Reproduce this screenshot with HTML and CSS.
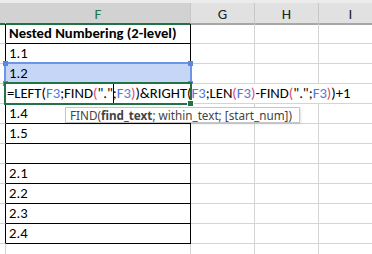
FILE: index.html
```html
<!DOCTYPE html>
<html lang="en">

<head>
    <meta charset="UTF-8">
    <title>Nested Numbering</title>
    <link rel="stylesheet" href="styles.css">
</head>

<body>

    <div class="sheet">

        <div class="head">
            <div class="col sel stub"></div>
            <div class="col sel">F</div>
            <div class="col">G</div>
            <div class="col">H</div>
            <div class="col">I</div>
        </div>

        <div class="row table">
            <div class="cell stub"></div>
            <div class="cell f bold">Nested Numbering (2-level)</div>
            <div class="cell"></div>
            <div class="cell"></div>
            <div class="cell"></div>
        </div>
        <div class="row table">
            <div class="cell stub"></div>
            <div class="cell f">1.1</div>
            <div class="cell"></div>
            <div class="cell"></div>
            <div class="cell"></div>
        </div>
        <div class="row table">
            <div class="cell stub"></div>
            <div class="cell f picked">1.2</div>
            <div class="cell"></div>
            <div class="cell"></div>
            <div class="cell"></div>
        </div>
        <div class="row table">
            <div class="cell stub"></div>
            <div class="cell f"></div>
            <div class="cell"></div>
            <div class="cell"></div>
            <div class="cell"></div>
        </div>
        <div class="row table">
            <div class="cell stub"></div>
            <div class="cell f">1.4</div>
            <div class="cell"></div>
            <div class="cell"></div>
            <div class="cell"></div>
        </div>
        <div class="row table">
            <div class="cell stub"></div>
            <div class="cell f">1.5</div>
            <div class="cell"></div>
            <div class="cell"></div>
            <div class="cell"></div>
        </div>
        <div class="row table">
            <div class="cell stub"></div>
            <div class="cell f"></div>
            <div class="cell"></div>
            <div class="cell"></div>
            <div class="cell"></div>
        </div>
        <div class="row table">
            <div class="cell stub"></div>
            <div class="cell f">2.1</div>
            <div class="cell"></div>
            <div class="cell"></div>
            <div class="cell"></div>
        </div>
        <div class="row table">
            <div class="cell stub"></div>
            <div class="cell f">2.2</div>
            <div class="cell"></div>
            <div class="cell"></div>
            <div class="cell"></div>
        </div>
        <div class="row table">
            <div class="cell stub"></div>
            <div class="cell f">2.3</div>
            <div class="cell"></div>
            <div class="cell"></div>
            <div class="cell"></div>
        </div>
        <div class="row table">
            <div class="cell stub"></div>
            <div class="cell f">2.4</div>
            <div class="cell"></div>
            <div class="cell"></div>
            <div class="cell"></div>
        </div>
        <div class="row">
            <div class="cell stub"></div>
            <div class="cell"></div>
            <div class="cell"></div>
            <div class="cell"></div>
            <div class="cell"></div>
        </div>

        <!-- F3 reference highlight -->
        <div class="ref">
            <span class="handle tl"></span>
            <span class="handle tr"></span>
            <span class="handle bl"></span>
            <span class="handle br"></span>
        </div>

        <!-- in-cell editing of F4 -->
        <div class="edit">=LEFT(<span class="r">F3</span>;FIND<span class="p">(</span>"."<span class="caret"></span>;<span class="r">F3</span><span class="p">)</span>)&amp;RIGHT(<span class="r">F3</span>;LEN<span class="p">(</span><span class="r">F3</span><span class="p">)</span>-FIND<span class="p">(</span>".";<span class="r">F3</span><span class="p">)</span>)+1</div>
        <div class="active"><span class="fill-handle"></span></div>

        <div class="tip">FIND(<b>find_text</b>; within_text; [start_num])</div>

    </div>

</body>

</html>
```

FILE: styles.css
```css
body {
    margin: 0;
    background-color: #fff;
    overflow: hidden;
    font-family: Calibri, Carlito, Lato, sans-serif;
    font-size: 14.67px;
    color: #000;
}

.sheet {
    position: relative;
    width: 383px;
}

.head,
.row {
    display: grid;
    grid-template-columns: 6px 185px 64px 64px 64px;
}

.head {
    height: 24px;
    box-sizing: border-box;
    background-color: #e1e1e1;
    border-top: 3px solid #ececec;
}

.head .col {
    display: flex;
    align-items: center;
    justify-content: center;
    padding-top: 2px;
    font-size: 15px;
    color: #222;
    border-right: 1px solid #c8c8c8;
    border-bottom: 2px solid #a6a6a6;
}

.head .col.sel {
    background-color: #d2d2d2;
    color: #217346;
    border-bottom-color: #217346;
}

.head .col.stub {
    border-right-color: #d2d2d2;
}

.row {
    height: 20px;
}

.cell {
    box-sizing: border-box;
    display: flex;
    align-items: flex-end;
    padding: 0 3px 2px;
    line-height: 15px;
    white-space: nowrap;
    overflow: hidden;
    border-right: 1px solid #d4d4d4;
    border-bottom: 1px solid #d4d4d4;
}

.cell.stub {
    padding: 0;
}

.table .cell.stub {
    border-right-color: #000;
}

.table .cell.f {
    border-right-color: #000;
    border-bottom-color: #000;
}

.cell.bold {
    font-weight: bold;
}

.cell.picked {
    background-color: #c6d6f7;
}

.ref {
    position: absolute;
    left: 4px;
    top: 62px;
    width: 188px;
    height: 21px;
    box-sizing: border-box;
    border: 2px solid #6d95e6;
    border-bottom: none;
}

.handle {
    position: absolute;
    width: 5px;
    height: 5px;
    background-color: #5b87e2;
}

.handle.tl { left: -3px; top: -3px; }
.handle.tr { right: -3px; top: -3px; }
.handle.bl { left: -3px; bottom: -3px; }
.handle.br { right: -3px; bottom: -3px; }

.edit {
    position: absolute;
    left: 6px;
    top: 84px;
    width: 366px;
    height: 19px;
    background-color: #fff;
    line-height: 19px;
    padding-left: 1px;
    white-space: nowrap;
}

.edit .r {
    color: #4a7ae0;
}

.edit .p {
    color: #e0457c;
}

.caret {
    display: inline-block;
    width: 1px;
    height: 20px;
    margin-right: -1px;
    margin-top: -1px;
    vertical-align: top;
    background-color: #000;
}

.active {
    position: absolute;
    left: 4px;
    top: 82px;
    width: 188px;
    height: 23px;
    box-sizing: border-box;
    border: 2px solid #217346;
}

.fill-handle {
    position: absolute;
    right: -4px;
    bottom: -4px;
    width: 5px;
    height: 5px;
    background-color: #217346;
    border: 1px solid #fff;
}

.tip {
    position: absolute;
    left: 65px;
    top: 107px;
    height: 16px;
    box-sizing: border-box;
    padding: 0 7px 0 4px;
    background-color: #fff;
    border: 1px solid #c6c6c6;
    box-shadow: 1px 1px 2px rgba(0, 0, 0, 0.12);
    font-family: "Segoe UI", "Noto Sans", sans-serif;
    font-size: 11.7px;
    line-height: 14px;
    color: #444;
    white-space: nowrap;
}
```
